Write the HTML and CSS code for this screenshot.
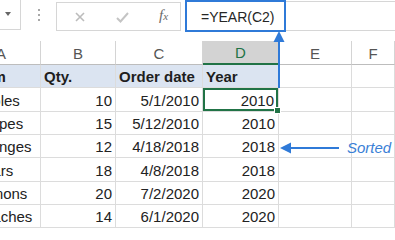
FILE: index.html
```html
<!DOCTYPE html>
<html>
<head>
<meta charset="utf-8">
<link rel="stylesheet" href="styles.css">
</head>
<body>
<div class="page">
  <div class="toolbar">
    <div class="namebox"><span class="dropdown"></span></div>
    <div class="dots"><i></i><i></i><i></i></div>
    <div class="fxbox">
      <svg class="ico-x" width="10" height="10" viewBox="0 0 10 10"><path d="M1 1L9 9M9 1L1 9" stroke="#bcbcbc" stroke-width="1.6" fill="none"/></svg>
      <svg class="ico-ok" width="13" height="11" viewBox="0 0 13 11"><path d="M1 6L4.5 9.5L12 1" stroke="#c4c4c4" stroke-width="2" fill="none"/></svg>
      <span class="fx">f<span class="fx-x">x</span></span>
    </div>
    <div class="formula">=YEAR(C2)</div>
    <div class="formula-rest"></div>
  </div>

  <div class="sheet">
    <div class="ch">A</div>
    <div class="ch">B</div>
    <div class="ch">C</div>
    <div class="ch ch-sel">D</div>
    <div class="ch">E</div>
    <div class="ch">F</div>

    <div class="c hd colA"><span class="clip-hd">Item</span></div>
    <div class="c hd">Qty.</div>
    <div class="c hd">Order date</div>
    <div class="c hd">Year</div>
    <div class="c"></div>
    <div class="c"></div>

    <div class="c colA"><span class="clip">Apples</span></div>
    <div class="c num">10</div>
    <div class="c num">5/1/2010</div>
    <div class="c num sel">2010</div>
    <div class="c"></div>
    <div class="c"></div>

    <div class="c colA"><span class="clip">Grapes</span></div>
    <div class="c num">15</div>
    <div class="c num">5/12/2010</div>
    <div class="c num">2010</div>
    <div class="c"></div>
    <div class="c"></div>

    <div class="c colA"><span class="clip">Oranges</span></div>
    <div class="c num">12</div>
    <div class="c num">4/18/2018</div>
    <div class="c num">2018</div>
    <div class="c"></div>
    <div class="c"></div>

    <div class="c colA"><span class="clip">Pears</span></div>
    <div class="c num">18</div>
    <div class="c num">4/8/2018</div>
    <div class="c num">2018</div>
    <div class="c"></div>
    <div class="c"></div>

    <div class="c colA"><span class="clip">Lemons</span></div>
    <div class="c num">20</div>
    <div class="c num">7/2/2020</div>
    <div class="c num">2020</div>
    <div class="c"></div>
    <div class="c"></div>

    <div class="c colA"><span class="clip">Peaches</span></div>
    <div class="c num">14</div>
    <div class="c num">6/1/2020</div>
    <div class="c num">2020</div>
    <div class="c"></div>
    <div class="c"></div>
  </div>

  <svg class="arrows" width="395" height="229" viewBox="0 0 395 229">
    <line x1="279" y1="40" x2="279" y2="88" stroke="#2f7ad8" stroke-width="2"/>
    <path d="M279 31L284.5 42L273.5 42Z" fill="#2f7ad8"/>
    <line x1="290" y1="148" x2="339" y2="148" stroke="#2f7ad8" stroke-width="2"/>
    <path d="M280 148L291 142.5L291 153.5Z" fill="#2f7ad8"/>
  </svg>
  <div class="note">Sorted</div>
</div>
</body>
</html>
```

FILE: styles.css
```css
html, body {
  margin: 0;
  padding: 0;
  background: #ffffff;
}
body {
  font-family: "Liberation Sans", Arial, sans-serif;
  color: #222222;
  overflow: hidden;
  width: 395px;
  height: 229px;
}
.page {
  position: relative;
  width: 395px;
  height: 229px;
  overflow: hidden;
}

/* toolbar */
.toolbar {
  display: flex;
  align-items: flex-start;
  height: 41px;
}
.namebox {
  width: 21px;
  height: 30px;
  border-right: 1px solid #d6d6d6;
  border-bottom: 1px solid #d6d6d6;
  display: flex;
  align-items: center;
  padding-left: 5px;
  box-sizing: border-box;
}
.dropdown {
  width: 0;
  height: 0;
  border-left: 3.5px solid transparent;
  border-right: 3.5px solid transparent;
  border-top: 4px solid #666666;
  margin-top: -1px;
}
.dots {
  width: 35px;
  height: 30px;
  display: flex;
  flex-direction: column;
  align-items: center;
  justify-content: center;
  gap: 3px;
  padding-left: 1px;
  box-sizing: border-box;
}
.dots i {
  display: block;
  width: 2px;
  height: 2px;
  background: #a8a8a8;
}
.fxbox {
  margin-top: 2px;
  width: 125px;
  height: 29px;
  border: 1px solid #d6d6d6;
  box-sizing: border-box;
  display: flex;
  align-items: center;
}
.ico-x {
  margin-left: 18px;
}
.ico-ok {
  margin-left: 31px;
  margin-top: 1px;
}
.fx {
  margin-left: 30px;
  font-family: "Liberation Serif", "Times New Roman", serif;
  font-style: italic;
  font-size: 15px;
  color: #6a6a6a;
  margin-top: -2px;
}
.fx-x {
  font-size: 11px;
}
.formula {
  margin-left: 4px;
  width: 101px;
  height: 32px;
  border: 2px solid #2f7ad8;
  box-sizing: border-box;
  font-size: 14px;
  color: #262626;
  display: flex;
  align-items: center;
  padding-left: 14px;
  padding-top: 1px;
}
.formula-rest {
  flex: 1;
  height: 30px;
  margin-top: 1px;
  border-top: 1px solid #d6d6d6;
  border-bottom: 1px solid #d6d6d6;
  box-sizing: border-box;
}

/* sheet */
.sheet {
  display: grid;
  grid-template-columns: 41px 75px 87px 76px 73px 43px;
  grid-template-rows: 24px 23px 24px 23px 23px 24px 23px 23px;
}
.ch {
  border-right: 1px solid #d4d4d4;
  border-bottom: 1px solid #bdbdbd;
  display: flex;
  align-items: center;
  justify-content: center;
  font-size: 15px;
  color: #555555;
  padding-top: 1px;
  box-sizing: border-box;
  background: #ffffff;
}
.ch:first-child {
  justify-content: flex-start;
  overflow: hidden;
  text-indent: -4px;
}
.ch-sel {
  background: #d3d3d3;
  color: #217346;
  border-bottom: 2px solid #217346;
}
.c {
  border-right: 1px solid #dcdcdc;
  border-bottom: 1px solid #dcdcdc;
  box-sizing: border-box;
  display: flex;
  align-items: center;
  font-size: 15px;
  padding: 1px 3px 0 3px;
  white-space: nowrap;
  overflow: hidden;
}
.hd {
  background: #dbe4f1;
  font-weight: bold;
  color: #1e1e1e;
}
.num {
  justify-content: flex-end;
}
.colA {
  padding-left: 0;
}
.clip {
  margin-left: -26px;
}
.clip-hd {
  margin-left: -25px;
}
.sel {
  position: relative;
  overflow: visible;
  box-shadow: inset 0 0 0 2px #217346;
  padding-right: 4px;
}
.sel::after {
  content: "";
  position: absolute;
  right: -3px;
  bottom: -3px;
  width: 5px;
  height: 5px;
  background: #217346;
  border: 1px solid #ffffff;
}

/* annotations */
.arrows {
  position: absolute;
  left: 0;
  top: 0;
}
.note {
  position: absolute;
  left: 347px;
  top: 139px;
  font-size: 15px;
  font-style: italic;
  color: #3a7fd6;
}
```
